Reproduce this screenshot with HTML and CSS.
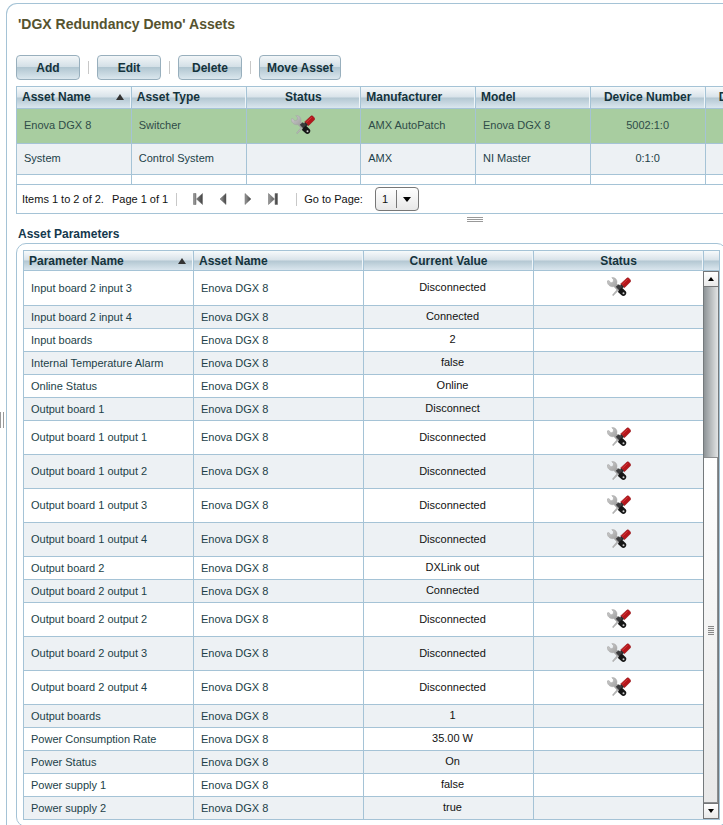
FILE: index.html
```html
<!DOCTYPE html>
<html lang="en">
<head>
<meta charset="utf-8">
<title>DGX Redundancy Demo Assets</title>
<link rel="stylesheet" href="styles.css">
</head>
<body>
<svg class="defs" aria-hidden="true">
  <defs>
    <linearGradient id="steel" x1="0" y1="0" x2="1" y2="1">
      <stop offset="0" stop-color="#d0d0d0"/><stop offset="1" stop-color="#909090"/>
    </linearGradient>
    <linearGradient id="nav" x1="0" y1="0" x2="1" y2="0">
      <stop offset="0" stop-color="#9a9a9a"/><stop offset="1" stop-color="#444444"/>
    </linearGradient>
  </defs>
  <symbol id="tools" viewBox="0 0 24 20">
    <path d="M6.200 18.800 5.400 18 12 10.300l1.300 1.200z" fill="#b5b5b5" stroke="#999" stroke-width=".4"/>
    <path d="M4.800.6C8 .2 10 2.500 10 5L9.700 6.800l3.500 3-3.100 3.200L6.800 9.600C3.200 10.300.3 7.700.1 4L2 3.600 3.800 5.900 6.200 5 6.500 2.700z" fill="url(#steel)" stroke="#a0a0a0" stroke-width=".5"/>
    <path d="M8.800 9.800 11.800 7.300 15.500 10.800l-3 3z" fill="#3a3a3c"/>
    <path d="M11.800 13.300 14.800 10.600l3.900 3.600c2 2.500-1.300 6.100-4.100 4.100L10.900 15z" fill="#161616"/>
    <circle cx="16.500" cy="16.300" r="1" fill="#ccc"/>
    <path d="M13.600 6.900 20 1Q21 .3 21.900 1.200L23.600 3.200Q24 4 23.500 4.700L17.500 10.700z" fill="#b5161b" stroke="#8c1216" stroke-width=".5"/>
    <path d="M15.400 7.300 20.700 2.300" stroke="#d23a3c" stroke-width="1"/>
    <path d="M13 8.300 14.300 7.200 17 9.900 15.500 11.200z" fill="#29292b"/>
  </symbol>
</svg>
<div class="page">
  <div class="gutter"><span class="grip-v"></span></div>
  <main class="panel">
    <h1>'DGX Redundancy Demo' Assets</h1>
    <div class="toolbar">
      <button type="button">Add</button><i></i>
      <button type="button">Edit</button><i></i>
      <button type="button">Delete</button><i></i>
      <button type="button">Move Asset</button>
    </div>

    <section class="assets">
      <table class="grid">
        <thead><tr>
          <th><span class="sorted">Asset Name <svg viewBox="0 0 8 6"><path d="M4 0 8 6H0z"/></svg></span></th>
          <th>Asset Type</th><th class="mid">Status</th><th>Manufacturer</th><th>Model</th>
          <th class="mid">Device Number</th><th class="mid">Device Number</th><th></th>
        </tr></thead>
        <tbody>
          <tr class="selected"><td>Enova DGX 8</td><td>Switcher</td><td class="mid"><svg class="tools" role="img" aria-label="Maintenance"><use href="#tools"/></svg></td><td>AMX AutoPatch</td><td>Enova DGX 8</td><td class="mid">5002:1:0</td><td></td><td></td></tr>
          <tr class="plain"><td>System</td><td>Control System</td><td></td><td>AMX</td><td>NI Master</td><td class="mid">0:1:0</td><td></td><td></td></tr>
          <tr class="filler"><td></td><td></td><td></td><td></td><td></td><td></td><td></td><td></td></tr>
        </tbody>
      </table>
      <div class="pager">
        <span>Items 1 to 2 of 2.</span>
        <span>Page 1 of 1</span>
        <i></i>
        <div class="nav">
          <button type="button" aria-label="First page"><svg viewBox="0 0 10 12"><path d="M.5.5h2.500v11H.5zM9.500.5v11L3.500 6z"/></svg></button>
          <button type="button" aria-label="Previous page"><svg viewBox="0 0 10 12"><path d="M8 .5v11L2 6z"/></svg></button>
          <button type="button" aria-label="Next page"><svg viewBox="0 0 10 12"><path d="M2 .5v11L8 6z"/></svg></button>
          <button type="button" aria-label="Last page"><svg viewBox="0 0 10 12"><path d="M9.500.5H7v11h2.500zM.5.5v11L6.500 6z"/></svg></button>
        </div>
        <i></i>
        <label for="goto">Go to Page:</label>
        <div class="drop"><select id="goto"><option>1</option></select><svg viewBox="0 0 8 5"><path d="M0 0h8L4 5z"/></svg></div>
      </div>
      <div class="divider"><span class="grip-h"></span></div>
    </section>

    <h2>Asset Parameters</h2>
    <section class="inner">
      <div class="params">
        <table class="grid">
          <thead><tr>
            <th><span class="sorted">Parameter Name <svg viewBox="0 0 8 6"><path d="M4 0 8 6H0z"/></svg></span></th>
            <th>Asset Name</th><th class="mid">Current Value</th><th class="mid">Status</th>
          </tr></thead>
          <tbody id="rows"></tbody>
        </table>
        <div class="side">
          <div class="corner"></div>
          <button type="button" aria-label="Scroll up"><svg viewBox="0 0 6 4"><path d="M3 0 6 4H0z"/></svg></button>
          <div class="track"><div class="thumb"><span></span></div></div>
          <button type="button" aria-label="Scroll down"><svg viewBox="0 0 6 4"><path d="M0 0h6L3 4z"/></svg></button>
        </div>
      </div>
    </section>
  </main>
</div>
<script src="rows.js"></script>
</body>
</html>
```
FILE: styles.css
```css
* { box-sizing: border-box; }
body {
  margin: 0;
  height: 100vh;
  overflow: hidden;
  background: #fff;
  color: #1c3f48;
  font: 11px/14px "Liberation Sans", Arial, sans-serif;
}
.defs { position: absolute; width: 0; height: 0; }
button, select { font: inherit; color: inherit; margin: 0; }
h1, h2 { margin: 0; font-weight: bold; }
i { width: 1px; height: 13px; background: #c8c8c8; }

.page { display: flex; overflow: hidden; }
.gutter { flex: 0 0 6px; display: flex; align-items: center; }
.grip-v {
  width: 4px;
  height: 16px;
  border: solid #999;
  border-width: 0 1px;
}
.panel {
  flex: 1 0 0;
  min-width: 0;
  margin: 3px -12px 0 0;
  padding: 12px 8px 12px 9px;
  border: solid #a5c3d6;
  border-width: 1px 0 0 1px;
  border-radius: 11px 0 0 0;
}
h1 { padding-left: 2px; font-size: 14px; line-height: 16px; color: #56532f; }

.toolbar { display: flex; align-items: center; gap: 8px; margin: 23px 0 6px; }
.toolbar button {
  min-width: 64px;
  height: 25px;
  padding: 0 7px;
  border: 1px solid #98afbd;
  border-radius: 4px;
  background: linear-gradient(#f2f6f8, #d3dfe6 48%, #b1c6d1 50%, #dbe7ee);
  font-size: 12px;
  font-weight: bold;
  color: #14333c;
}

.grid { border-spacing: 0; table-layout: fixed; }
.grid th {
  padding: 0 5px;
  border: solid #a5c3d6;
  border-width: 1px 0 1px 1px;
  background: linear-gradient(#f7fafb, #d8e2e9 48%, #b3c7d2 52%, #dae6ee);
  box-shadow: inset -1px 0 #eff5f8;
  font-size: 12px;
  text-align: left;
  color: #14333c;
  white-space: nowrap;
}
.grid td {
  padding: 0 7px;
  border: solid #a5c3d6;
  border-width: 0 0 1px 1px;
  white-space: nowrap;
}
.grid .mid { text-align: center; }
.sorted { display: flex; align-items: center; justify-content: space-between; }
.sorted svg { width: 8px; height: 6px; margin-right: 2px; fill: #333; }
.tools { display: block; width: 24px; height: 20px; margin: 0 auto; }

.assets { width: 918px; }
.assets .grid { width: 100%; }
.assets th { height: 23px; padding-bottom: 1px; }
.assets .selected td { height: 35px; padding-bottom: 2px; background: #a8cda0; color: #2f4c48; }
.assets .plain td { height: 31px; padding-bottom: 2px; background: #edf1f4; }
.assets .filler td { height: 10px; }
.pager {
  display: flex;
  align-items: center;
  height: 29px;
  padding-left: 5px;
  border: solid #a5c3d6;
  border-width: 0 0 1px 1px;
  color: #111;
}
.pager span { margin-right: 8px; }
.nav { display: flex; gap: 15px; margin: 0 18px 0 16px; }
.nav button { display: flex; width: 10px; padding: 0; border: 0; background: none; }
.nav svg { width: 10px; height: 12px; fill: url(#nav); stroke: #666; stroke-width: 0.5; }
.pager label { margin: 0 12px 0 7px; }
.drop { display: flex; align-items: center; position: relative; }
.drop select {
  appearance: none;
  width: 44px;
  height: 24px;
  padding: 0 6px;
  border: 1px solid #777;
  border-radius: 4px;
  background: linear-gradient(#777, #777) 20px 50% / 1px 18px no-repeat, linear-gradient(#fff, #e8e8e8);
}
.drop svg { position: absolute; right: 8px; width: 8px; height: 5px; pointer-events: none; }
.divider { display: flex; justify-content: center; padding: 3px 0 0; }
.grip-h {
  width: 16px;
  height: 6px;
  background: repeating-linear-gradient(#999 0 1px, #fff 1px 2px);
}

h2 { margin: 4px 0 2px; padding-left: 2px; font-size: 12px; line-height: 14px; color: #14384d; }
.inner { padding: 6px; border: 1px solid #a5c3d6; border-radius: 10px; }
.params { display: flex; border-right: 1px solid #a5c3d6; }
.params .grid { flex: 1; width: 0; }
.params th { height: 21px; }
.params tbody tr:first-child td { height: 35px; }
.params td { height: 23px; padding-bottom: 1px; }
.params .fault td { height: 34px; }
.params tbody tr:nth-child(even) td { background: #edf1f4; }
.params td.mid { padding-bottom: 2px; color: #111; }
.params td.value { padding-left: 15px; }
.side { display: flex; flex-direction: column; width: 16px; border-bottom: 1px solid #a5c3d6; }
.corner {
  height: 21px;
  border: solid #a5c3d6;
  border-width: 1px 0 1px 1px;
  background: linear-gradient(#f7fafb, #d8e2e9 48%, #b3c7d2 52%, #dae6ee);
}
.side button {
  display: grid;
  place-items: center;
  height: 16px;
  padding: 0;
  border: 1px solid #747678;
  background: linear-gradient(#fff, #e9e9e9);
}
.side svg { width: 6px; height: 4px; }
.track {
  display: flex;
  flex: 1;
  align-items: flex-end;
  border: solid #74797c;
  border-width: 0 1px;
  background: linear-gradient(90deg, #8e9497, #e2e4e5);
}
.thumb {
  display: grid;
  place-items: center;
  width: 100%;
  height: 67%;
  border: solid #8c8e90;
  border-width: 1px 1px 1px 0;
  background: linear-gradient(#fff, #e8e8e8);
}
.thumb span {
  width: 6px;
  height: 9px;
  background: repeating-linear-gradient(#888 0 1px, #eee 1px 2px);
}
```
FILE: rows.js
```js
const asset = 'Enova DGX 8';
const parameters = [
  ['Input board 2 input 3', 'Disconnected'],
  ['Input board 2 input 4', 'Connected'],
  ['Input boards', '2'],
  ['Internal Temperature Alarm', 'false'],
  ['Online Status', 'Online'],
  ['Output board 1', 'Disconnect'],
  ['Output board 1 output 1', 'Disconnected'],
  ['Output board 1 output 2', 'Disconnected'],
  ['Output board 1 output 3', 'Disconnected'],
  ['Output board 1 output 4', 'Disconnected'],
  ['Output board 2', 'DXLink out'],
  ['Output board 2 output 1', 'Connected'],
  ['Output board 2 output 2', 'Disconnected'],
  ['Output board 2 output 3', 'Disconnected'],
  ['Output board 2 output 4', 'Disconnected'],
  ['Output boards', '1'],
  ['Power Consumption Rate', '35.00 W'],
  ['Power Status', 'On'],
  ['Power supply 1', 'false'],
  ['Power supply 2', 'true']
];
const icon = '<svg class="tools" role="img" aria-label="Maintenance"><use href="#tools"/></svg>';
document.getElementById('rows').innerHTML = parameters.map(([name, value]) => {
  const fault = value === 'Disconnected';
  return `<tr class="${fault ? 'fault' : ''}"><td>${name}</td><td>${asset}</td>` +
    `<td class="mid value">${value}</td><td class="mid">${fault ? icon : ''}</td></tr>`;
}).join('');
```
